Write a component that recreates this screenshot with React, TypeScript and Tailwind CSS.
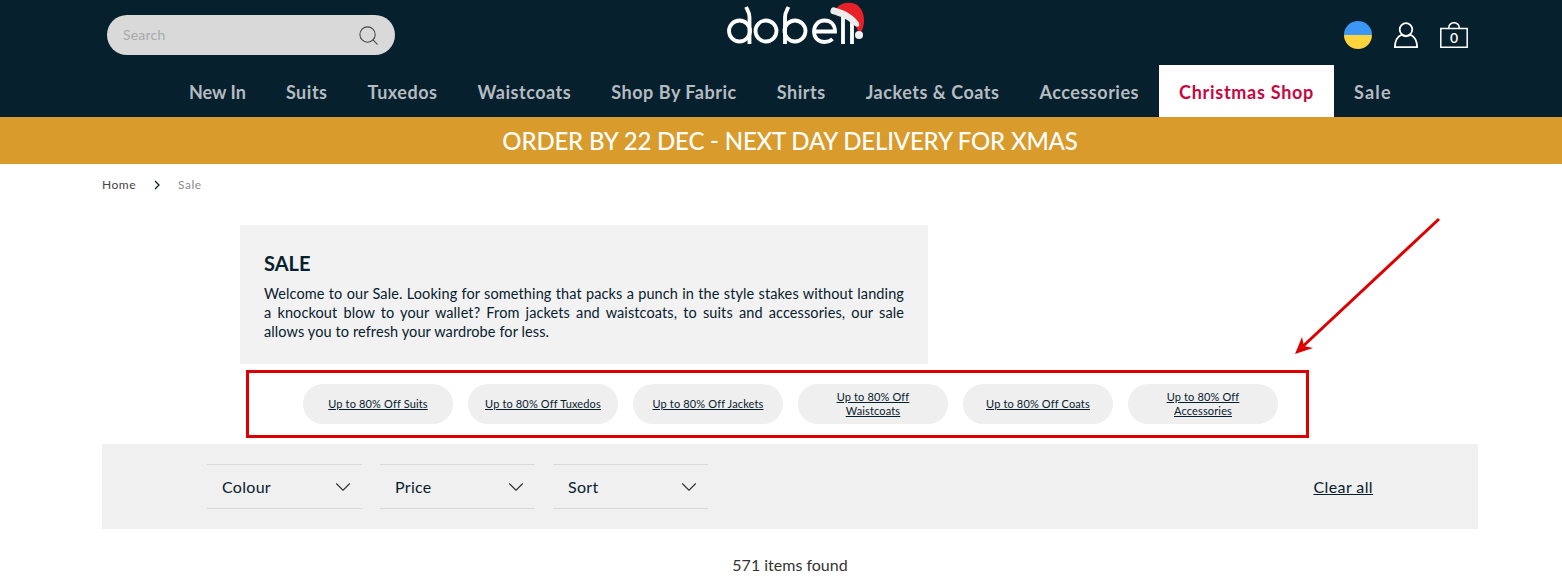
import { ChevronDown, Search } from 'lucide-react';

const navItems = [
  { label: 'New In', className: 'flex items-center px-[20px] pt-[2px] tracking-[0px]' },
  { label: 'Suits', className: 'flex items-center px-[20px] pt-[2px]' },
  { label: 'Tuxedos', className: 'flex items-center px-[20px] pt-[2px]' },
  { label: 'Waistcoats', className: 'flex items-center px-[20px] pt-[2px]' },
  { label: 'Shop By Fabric', className: 'flex items-center px-[20px] pt-[2px]' },
  { label: 'Shirts', className: 'flex items-center px-[20px] pt-[2px]' },
  { label: 'Jackets & Coats', className: 'flex items-center px-[20px] pt-[2px]' },
  { label: 'Accessories', className: 'flex items-center px-[20px] pt-[2px]' },
  { label: 'Christmas Shop', className: 'flex items-center bg-white px-[20px] pt-[2px] tracking-[0.72px] text-[#c8063f]' },
  { label: 'Sale', className: 'flex items-center px-[20px] pt-[2px] tracking-[1.2px]' },
];

const pills = [
  'Up to 80% Off Suits',
  'Up to 80% Off Tuxedos',
  'Up to 80% Off Jackets',
  'Up to 80% Off Waistcoats',
  'Up to 80% Off Coats',
  'Up to 80% Off Accessories',
];

function Logo() {
  return (
    <svg width="140" height="48" viewBox="0 0 140 48" className="block" fill="none">
      <g stroke="#fff" strokeWidth="3.8">
        <circle cx="13.500" cy="29" r="10.500" />
        <path d="M23.500 42V15c0-4-1.500-6-3.500-10" />
        <circle cx="40" cy="29" r="10.500" />
        <path d="M59 42V15c0-4 1.500-6 3.500-10" />
        <circle cx="69" cy="29" r="10.500" />
        <path d="M88 29.500h21c0-7-4.500-11-10.500-11S88 23 88 29.500 92.500 40 98.500 40c3.500 0 6-1 8-3" />
        <path d="M117 42V14M126 42V14" />
      </g>
      <path d="M109 9C112 2 119 0 126 1c7 1 12 8 12 17 0 5-1 9-3 12l-3-1c-2-7-8-12-23-20z" fill="#e8202a" />
      <path d="M105 7c1-2 3-2 5-1 9 2 19 8 23 15 1 3-1 5-4 3-6-6-15-10-23-12-2-1-2-3-1-5z" fill="#ececec" />
      <circle cx="133" cy="33" r="4" fill="#f0f0f0" />
    </svg>
  );
}

function Flag() {
  return (
    <div className="h-7 w-7 overflow-hidden rounded-full">
      <div className="h-3.5 bg-[#3b96f5]" />
      <div className="h-3.5 bg-[#fdd33e]" />
    </div>
  );
}

function UserIcon() {
  return (
    <svg width="24" height="26" viewBox="0 0 24 26" fill="none" stroke="#fff" strokeWidth="1.800">
      <circle cx="12" cy="7.500" r="6.300" />
      <path d="M7.500 12.800C3.800 14.500 1 19 .9 25.100h22.200C23 19 20.200 14.500 16.500 12.800c-2.800 2-6.200 2-9 0z" />
    </svg>
  );
}

function BagIcon() {
  return (
    <div className="relative h-[26px] w-[28px]">
      <svg width="28" height="26" viewBox="0 0 28 26" fill="none" stroke="#fff" strokeWidth="1.500">
        <path d="M.8 6.500h26.400v18.700H.8z" />
        <path d="M8.800 6.500V5.500a5.200 4.800 0 0 1 10.400 0v1" />
      </svg>
      <span className="absolute inset-x-0 top-[7px] text-center text-[14px] leading-[18px] font-semibold text-white">0</span>
    </div>
  );
}

function FilterSelect({ label }: { label: string }) {
  return (
    <div className="flex h-[45px] w-[155px] items-center justify-between border-y border-[#d9d9d9] pr-[6px] pl-[15px] text-[16px] tracking-[0.3px] text-[#07202e]">
      <span>{label}</span>
      <ChevronDown size={26} strokeWidth={1} className="text-[#333]" />
    </div>
  );
}

export default function App() {
  return (
    <div className="relative h-[577px] overflow-hidden bg-white font-['Lato',sans-serif] text-[#07202e]">
      <div className="w-[1580px]">
        <header className="h-[117px] bg-[#07202e]">
          <div className="grid h-[65px] grid-cols-[1fr_auto_1fr] pr-[112px] pl-[107px]">
            <div className="pt-[15px]">
              <div className="flex h-[40px] w-[288px] items-center justify-between rounded-[20px] bg-[#d9d9d9] pr-[15px] pl-[16px]">
                <span className="pb-[1px] text-[14px] tracking-[0.2px] text-[#a9a9a9]">Search</span>
                <Search size={23} strokeWidth={1.100} className="text-[#444]" />
              </div>
            </div>
            <div className="pt-[2px] pl-[17px]">
              <Logo />
            </div>
            <div className="flex items-start justify-end gap-[22px] pt-[21px]">
              <Flag />
              <div className="pt-[1px]">
                <UserIcon />
              </div>
              <div className="pt-[1px]">
                <BagIcon />
              </div>
            </div>
          </div>
          <nav className="flex h-[52px] items-stretch pl-[169px] text-[18px] font-bold tracking-[0.52px] text-[#b5bcc1]">
            {navItems.map((item) => (
              <a key={item.label} className={item.className}>
                {item.label}
              </a>
            ))}
          </nav>
        </header>

        <div className="flex h-[47px] items-center justify-center bg-[#d89b2c] text-[24px] font-medium tracking-[-0.18px] text-white">
          ORDER BY 22 DEC - NEXT DAY DELIVERY FOR XMAS
        </div>

        <main className="mx-[102px]">
          <div className="flex h-[42px] items-center gap-[17px] text-[12px] tracking-[0.5px]">
            <span className="text-[#444]">Home</span>
            <svg width="8" height="10" viewBox="0 0 8 10" fill="none" stroke="#07202e" strokeWidth="1.300">
              <path d="M2 1l4 4-4 4" />
            </svg>
            <span className="text-[#8c8c8c]">Sale</span>
          </div>

          <section className="mt-[19px] ml-[138px] h-[139px] w-[688px] bg-[#f2f2f2] px-[24px] pt-[26px]">
            <h1 className="text-[20px] leading-[24px] font-bold">SALE</h1>
            <p className="mt-[9px] text-justify text-[14.500px] leading-[19px] tracking-[0.1px]">
              Welcome to our Sale. Looking for something that packs a punch in the style stakes without landing a knockout blow to your wallet? From jackets and waistcoats, to suits and accessories, our sale allows you to refresh your wardrobe for less.
            </p>
          </section>

          <div className="mt-[6px] ml-[144px] flex h-[68px] w-[1063px] items-center gap-[15px] border-[3px] border-[#dd0000] pl-[54px]">
            {pills.map((pill) => (
              <a key={pill} className="flex h-[40px] w-[150px] items-center justify-center rounded-[20px] bg-[#efefef] px-[14px] text-center text-[11px] leading-[14px] tracking-[0.15px] underline">
                {pill}
              </a>
            ))}
          </div>

          <div className="mt-[6px] flex h-[85px] items-center justify-between bg-[#f0f0f0] px-[105px]">
            <div className="flex gap-[18px]">
              <FilterSelect label="Colour" />
              <FilterSelect label="Price" />
              <FilterSelect label="Sort" />
            </div>
            <a className="text-[16px] tracking-[0.4px] underline">Clear all</a>
          </div>

          <p className="mt-[26px] text-center text-[16px] leading-[20px] text-[#333]">571 items found</p>
        </main>
      </div>

      <svg className="absolute top-[215px] left-[1290px]" width="155" height="145" viewBox="0 0 155 145" fill="none">
        <path d="M149 4L10 134" stroke="#dd0000" strokeWidth="3" />
        <path d="M5 139L12 122L14 131L23 133z" fill="#dd0000" />
      </svg>
    </div>
  );
}
